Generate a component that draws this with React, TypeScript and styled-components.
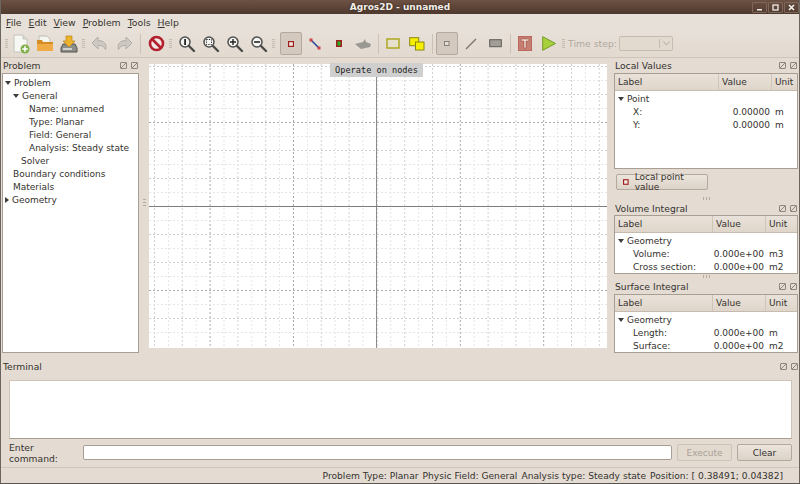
import React from 'react';
import styled, { createGlobalStyle } from 'styled-components';

const GlobalStyle = createGlobalStyle`
  html, body { margin: 0; padding: 0; background: #e4dcd3; }
  * { box-sizing: border-box; }
`;

const Window = styled.div`
  width: 800px;
  height: 484px;
  display: flex;
  flex-direction: column;
  overflow: hidden;
  background: #e4dcd3;
  color: #35322e;
  font-family: "DejaVu Sans", sans-serif;
  font-size: 9px;
  border-left: 1px solid #6b6560;
  border-right: 1px solid #6b6560;
  border-bottom: 1px solid #5a5550;
`;

const TitleBar = styled.div`
  height: 14px;
  flex: none;
  margin: 0 -1px;
  position: relative;
  display: flex;
  align-items: center;
  justify-content: center;
  background: linear-gradient(#6d5244, #4f392e);
  color: #f4efe9;
  font-size: 9px;
  font-weight: 700;
  text-shadow: 0 0 2px #221a15;
`;

const TitleText = styled.span`
  margin-left: 0;
`;

const WindowButtons = styled.div`
  position: absolute;
  right: 1px;
  top: 2px;
  display: flex;
  gap: 1px;
`;

const WindowButton = styled.div`
  width: 15px;
  height: 11px;
  border: 1px solid #7d665a;
  border-radius: 1px;
  display: flex;
  align-items: center;
  justify-content: center;
`;

const MenuBar = styled.div`
  height: 16px;
  flex: none;
  display: flex;
  align-items: center;
  padding-left: 5px;
  gap: 7px;
  background: #e7e0d8;
`;

const MenuItem = styled.span`
  font-size: 9.3px;
  &::first-letter { text-decoration: underline; }
`;

const Toolbar = styled.div`
  height: 28px;
  flex: none;
  display: flex;
  align-items: center;
  padding-left: 3px;
  background: linear-gradient(#e8e1d9, #e2d9cf);
  border-bottom: 1px solid #cfc5ba;
`;

const Handle = styled.div<{ $w: number }>`
  width: ${({ $w }) => $w}px;
  height: 9px;
  flex: none;
  background:
    repeating-linear-gradient(#c5bcb1 0 1px, transparent 1px 2px) 1px 0 / 3px 100% no-repeat;
`;

const Separator = styled.div<{ $w: number }>`
  width: ${({ $w }) => $w}px;
  height: 20px;
  flex: none;
  display: flex;
  justify-content: center;
  &::before {
    content: "";
    width: 1px;
    background: #cbc1b5;
  }
`;

const ToolButton = styled.div<{ $pressed?: boolean }>`
  width: 24px;
  height: 24px;
  flex: none;
  display: flex;
  align-items: center;
  justify-content: center;
  border-radius: 2px;
  ${({ $pressed }) =>
    $pressed &&
    `
    margin: 0 1px;
    width: 22px;
    height: 23px;
    background: #d3c9be;
    border: 1px solid #b3a99e;
  `}
`;

const TimeLabel = styled.span`
  flex: none;
  width: 51px;
  color: #b0a89e;
  font-size: 9.3px;
`;

const Combo = styled.div`
  width: 54px;
  height: 15px;
  flex: none;
  display: flex;
  justify-content: flex-end;
  border: 1px solid #c6bcb0;
  border-radius: 2px;
  background: #e2d9cf;
`;

const ComboArrow = styled.div`
  width: 13px;
  border-left: 1px solid #c6bcb0;
  margin: 2px 0;
  display: flex;
  align-items: center;
  justify-content: center;
`;

const Main = styled.div`
  height: 300px;
  flex: none;
  display: flex;
`;

const LeftDock = styled.div`
  width: 138px;
  flex: none;
  padding-left: 1px;
`;

const DockHeader = styled.div<{ $h?: number }>`
  height: ${({ $h }) => $h ?? 15}px;
  display: flex;
  align-items: center;
  justify-content: space-between;
  font-size: 9.2px;
  padding: 0 0 0 1px;
`;

const DockButtons = styled.div`
  display: flex;
  gap: 4px;
  padding-right: 1px;
`;

const DockButton = styled.div`
  width: 7px;
  height: 7px;
  border: 1px solid #8f877d;
  border-radius: 1px;
  background: linear-gradient(135deg, transparent 44%, #8f877d 44% 56%, transparent 56%);
`;

const Tree = styled.div`
  height: 280px;
  background: #fff;
  border: 1px solid #a89e92;
  padding-top: 2px;
`;

const TreeRow = styled.div<{ $indent: number }>`
  height: 13px;
  display: flex;
  align-items: center;
  padding-left: ${({ $indent }) => $indent}px;
  white-space: nowrap;
`;

const Arrow = styled.span<{ $open: boolean }>`
  width: 0;
  height: 0;
  margin-left: -8px;
  margin-right: 3px;
  border-style: solid;
  ${({ $open }) =>
    $open
      ? 'border-width: 4px 3px 0 3px; border-color: #3c3c3c transparent transparent transparent;'
      : 'border-width: 3px 0 3px 4px; border-color: transparent transparent transparent #3c3c3c;'}
`;

const Splitter = styled.div`
  width: 10px;
  flex: none;
  display: flex;
  align-items: center;
  justify-content: center;
  padding-bottom: 12px;
  color: #b5ab9f;
`;

const Dots = styled.div<{ $row?: boolean }>`
  width: ${({ $row }) => ($row ? 7 : 3)}px;
  height: ${({ $row }) => ($row ? 3 : 7)}px;
  background: ${({ $row }) =>
    $row
      ? 'repeating-linear-gradient(90deg, #b5ab9f 0 1px, transparent 1px 3px)'
      : 'repeating-linear-gradient(#b5ab9f 0 1px, transparent 1px 3px)'};
`;

const CanvasArea = styled.div`
  width: 458px;
  height: 284px;
  margin-top: 6px;
  flex: none;
  position: relative;
  background: #fff;
`;

const CanvasLabel = styled.div`
  position: absolute;
  left: 181px;
  top: -1px;
  width: 93px;
  height: 14px;
  background: #cfcfcf;
  color: #222;
  font-family: "DejaVu Sans Mono", monospace;
  font-size: 8.6px;
  line-height: 14px;
  text-align: center;
`;

const RightDock = styled.div`
  width: 184px;
  margin-left: 7px;
  flex: none;
  display: flex;
  flex-direction: column;
`;

const TableBox = styled.div<{ $h: number }>`
  height: ${({ $h }) => $h}px;
  flex: none;
  background: #fff;
  border: 1px solid #a89e92;
`;

const TableHead = styled.div<{ $cols: string }>`
  height: 17px;
  display: grid;
  grid-template-columns: ${({ $cols }) => $cols};
  background: linear-gradient(#e9e2da, #dfd5ca);
  border-bottom: 1px solid #c5bbaf;
`;

const HeadCell = styled.div`
  padding-left: 3px;
  display: flex;
  align-items: center;
  border-right: 1px solid #cfc5b9;
  &:last-child { border-right: none; }
`;

const TableRow = styled.div<{ $cols: string }>`
  height: 13px;
  display: grid;
  grid-template-columns: ${({ $cols }) => $cols};
  align-items: center;
  &:nth-child(2) { margin-top: 1px; }
`;

const GroupCell = styled.div`
  padding-left: 11px;
  display: flex;
  align-items: center;
`;

const LabelCell = styled.div`
  padding-left: 18px;
`;

const ValueCell = styled.div`
  text-align: right;
  padding-right: 2px;
`;

const UnitCell = styled.div`
  padding-left: 3px;
`;

const ActionRow = styled.div`
  height: 27px;
  flex: none;
  padding: 5px 0 0 2px;
`;

const PointButton = styled.div`
  width: 92px;
  height: 16px;
  display: flex;
  align-items: center;
  gap: 6px;
  padding-left: 6px;
  border: 1px solid #b3a99d;
  border-radius: 2px;
  background: linear-gradient(#ebe5dd, #dcd2c7);
`;

const DotRow = styled.div<{ $h: number }>`
  height: ${({ $h }) => $h}px;
  flex: none;
  display: flex;
  align-items: center;
  justify-content: center;
`;

const Terminal = styled.div`
  height: 109px;
  flex: none;
  display: flex;
  flex-direction: column;
  padding: 0 0 0 1px;
`;

const TerminalOutput = styled.div`
  height: 59px;
  flex: none;
  margin: 6px 7px 0 7px;
  background: #fff;
  border: 1px solid #cdc3b7;
  border-bottom-color: #a89e92;
`;

const CommandRow = styled.div`
  display: flex;
  align-items: center;
  margin: 5px 7px 0 7px;
  height: 17px;
`;

const CommandLabel = styled.span`
  width: 74px;
  flex: none;
  font-size: 9.2px;
`;

const CommandInput = styled.div`
  width: 589px;
  height: 15px;
  flex: none;
  background: #fff;
  border: 1px solid #a89e92;
  border-radius: 2px;
`;

const TermButton = styled.div<{ $disabled?: boolean }>`
  width: 55px;
  height: 17px;
  flex: none;
  margin-left: 5px;
  display: flex;
  align-items: center;
  justify-content: center;
  border: 1px solid ${({ $disabled }) => ($disabled ? '#cdc3b7' : '#b3a99d')};
  border-radius: 2px;
  color: ${({ $disabled }) => ($disabled ? '#aaa196' : '#35322e')};
  background: ${({ $disabled }) =>
    $disabled ? '#e2d9cf' : 'linear-gradient(#ebe5dd, #dcd2c7)'};
`;

const StatusBar = styled.div`
  height: 16px;
  flex: none;
  display: flex;
  align-items: center;
  justify-content: flex-end;
  gap: 4px;
  padding-right: 16px;
  border-top: 1px solid #cfc5ba;
  white-space: nowrap;
  font-size: 9.15px;
`;

const Magnifier = ({ mark }: { mark: React.ReactNode }) => (
  <svg width="18" height="18" viewBox="0 0 18 18">
    <line x1="10.5" y1="10.5" x2="16" y2="16" stroke="#4a4a48" strokeWidth="2.4" strokeLinecap="round" />
    <circle cx="7" cy="7" r="5" fill="#f4f4f2" stroke="#4f4f4d" strokeWidth="1.5" />
    {mark}
  </svg>
);

const icons: Record<string, React.ReactNode> = {
  newDoc: (
    <svg width="18" height="20" viewBox="0 0 18 20">
      <path d="M2 1h9l4 4v13H2z" fill="#f7f7f3" stroke="#c4c4bc" />
      <path d="M11 1v4h4" fill="#dcdcd6" stroke="#c4c4bc" />
      <circle cx="13" cy="15" r="4.5" fill="#7fb04a" />
      <path d="M13 12.2v5.6M10.2 15h5.6" stroke="#fff" strokeWidth="1.6" />
    </svg>
  ),
  open: (
    <svg width="18" height="18" viewBox="0 0 18 18">
      <path d="M3 1h8l3 3v5H3z" fill="#f5f5f0" stroke="#bdbdb5" />
      <path d="M1 5h5l1 2h10v9H1z" fill="#d58c24" />
      <path d="M1 9h16v7H1z" fill="#efab45" />
    </svg>
  ),
  save: (
    <svg width="18" height="18" viewBox="0 0 18 18">
      <path d="M3 9h12l2 4v4H1v-4z" fill="#8d8d89" stroke="#55554f" />
      <path d="M3 14h9" stroke="#eee" strokeWidth="1.4" />
      <path d="M6 1h6v5h3l-6 6-6-6h3z" fill="#edb32c" stroke="#b98416" strokeWidth=".7" />
    </svg>
  ),
  undo: (
    <svg width="18" height="18" viewBox="0 0 18 18">
      <path d="M7 2 1 8l6 6v-3.5c4-.3 6 .8 7.5 4 1.5-5-1-9-7.5-9z" fill="#cdc9c2" stroke="#b2aea7" />
    </svg>
  ),
  redo: (
    <svg width="18" height="18" viewBox="0 0 18 18">
      <path d="M11 2l6 6-6 6v-3.5c-4-.3-6 .8-7.5 4C2 9.5 4.500 5.500 11 5.500z" fill="#cdc9c2" stroke="#b2aea7" />
    </svg>
  ),
  stop: (
    <svg width="17" height="17" viewBox="0 0 17 17">
      <circle cx="8.500" cy="8.500" r="6.500" fill="#f1e6e4" stroke="#b21f2d" strokeWidth="2.600" />
      <line x1="4" y1="4" x2="13" y2="13" stroke="#b21f2d" strokeWidth="2.600" />
    </svg>
  ),
  zoomBest: <Magnifier mark={<rect x="6.200" y="4" width="1.800" height="6" fill="#222" />} />,
  zoomRegion: (
    <Magnifier
      mark={<rect x="4.500" y="4.500" width="5" height="5" fill="none" stroke="#222" strokeDasharray="1.200 1.200" />}
    />
  ),
  zoomIn: <Magnifier mark={<path d="M7 4v6M4 7h6" stroke="#222" strokeWidth="1.400" />} />,
  zoomOut: <Magnifier mark={<path d="M4 7h6" stroke="#222" strokeWidth="1.600" />} />,
  node: (
    <svg width="6" height="6" viewBox="0 0 6 6">
      <rect x=".6" y=".6" width="4.800" height="4.800" fill="#f3e9e2" stroke="#a02020" strokeWidth="1.200" />
    </svg>
  ),
  edge: (
    <svg width="12" height="12" viewBox="0 0 12 12">
      <line x1="2" y1="2" x2="10" y2="10" stroke="#1c3f9c" strokeWidth="1.400" />
      <rect x="0.500" y="0.500" width="3" height="3" fill="#c44" />
      <rect x="8.500" y="8.500" width="3" height="3" fill="#c44" />
    </svg>
  ),
  label: (
    <svg width="6" height="7" viewBox="0 0 6 7">
      <rect width="6" height="7" fill="#a02020" />
      <rect x="1.500" y="1.500" width="3" height="4" fill="#1fb51f" />
    </svg>
  ),
  mesh: (
    <svg width="16" height="10" viewBox="0 0 16 10">
      <path d="M0 5 8 3l2-3 1 3 5 2-1 3-9 2z" fill="#9a9892" />
    </svg>
  ),
  rect: (
    <svg width="14" height="12" viewBox="0 0 14 12">
      <rect x="1" y="1" width="12" height="9" fill="#e7e0cc" stroke="#a8a414" strokeWidth="1.400" />
    </svg>
  ),
  polys: (
    <svg width="16" height="14" viewBox="0 0 16 14">
      <rect x=".7" y=".7" width="9" height="8" fill="#f7ef00" stroke="#8a8612" />
      <rect x="6.500" y="5" width="8.500" height="8" fill="#f7ef00" stroke="#8a8612" />
    </svg>
  ),
  nodeSmall: (
    <svg width="6" height="6" viewBox="0 0 6 6">
      <rect x=".5" y=".5" width="4.500" height="4" fill="#e5ddd3" stroke="#85807a" />
    </svg>
  ),
  line: (
    <svg width="12" height="12" viewBox="0 0 12 12">
      <line x1="1" y1="11" x2="11" y2="1" stroke="#76736e" strokeWidth="1.300" />
    </svg>
  ),
  grayRect: (
    <svg width="13" height="9" viewBox="0 0 13 9">
      <rect x=".7" y=".7" width="11.600" height="7" fill="#a19d97" stroke="#5f5c57" />
    </svg>
  ),
  terminal: (
    <svg width="14" height="15" viewBox="0 0 14 15">
      <rect width="14" height="15" fill="#c67e72" stroke="#b0554a" />
      <path d="M3 3h8v2H8v7H6V5H3z" fill="#f3e4dc" stroke="#8e3c32" strokeWidth=".5" />
    </svg>
  ),
  play: (
    <svg width="14" height="15" viewBox="0 0 14 15">
      <path d="M.7.7v13.600L13.500 7.500z" fill="#a8cf3c" stroke="#6f9a22" />
    </svg>
  ),
};

// canvas grid, spacing read from the reference
const gridXs = Array.from({ length: 33 }, (_, i) => 5.500 + i * 13.9);
const gridYs = Array.from({ length: 20 }, (_, i) => 2.500 + i * 14);

const gridColor = (i: number, major: number) => {
  const d = Math.abs(i - major);
  if (d % 6 === 0) return '#a9a9a9';
  return d % 2 === 0 ? '#d0d0d0' : '#e6e6e6';
};

const CanvasGrid = () => (
  <svg width="458" height="284" viewBox="0 0 458 284">
    {gridXs.map((x, i) => (
      <line key={`x${i}`} x1={x} y1="0" x2={x} y2="284" stroke={gridColor(i, 16)} strokeDasharray="2 2" />
    ))}
    {gridYs.map((y, i) => (
      <line key={`y${i}`} x1="0" y1={y} x2="458" y2={y} stroke={gridColor(i, 10)} strokeDasharray="2 2" />
    ))}
    <line x1="227.500" y1="0" x2="227.500" y2="284" stroke="#8c8c8c" />
    <line x1="0" y1="142.500" x2="458" y2="142.500" stroke="#7c7c7c" />
  </svg>
);

const problemTree: { text: string; indent: number; arrow?: boolean }[] = [
  { text: 'Problem', indent: 10, arrow: true },
  { text: 'General', indent: 18, arrow: true },
  { text: 'Name: unnamed', indent: 26 },
  { text: 'Type: Planar', indent: 26 },
  { text: 'Field: General', indent: 26 },
  { text: 'Analysis: Steady state', indent: 26 },
  { text: 'Solver', indent: 18 },
  { text: 'Boundary conditions', indent: 10 },
  { text: 'Materials', indent: 10 },
  { text: 'Geometry', indent: 10, arrow: false },
];

const ResultTable = ({
  h,
  cols,
  group,
  rows,
}: {
  h: number;
  cols: string;
  group: string;
  rows: [string, string, string][];
}) => (
  <TableBox $h={h}>
    <TableHead $cols={cols}>
      <HeadCell>Label</HeadCell>
      <HeadCell>Value</HeadCell>
      <HeadCell>Unit</HeadCell>
    </TableHead>
    <TableRow $cols="1fr">
      <GroupCell>
        <Arrow $open />
        {group}
      </GroupCell>
    </TableRow>
    {rows.map(([label, value, unit]) => (
      <TableRow key={label} $cols={cols}>
        <LabelCell>{label}</LabelCell>
        <ValueCell>{value}</ValueCell>
        <UnitCell>{unit}</UnitCell>
      </TableRow>
    ))}
  </TableBox>
);

const DockControls = () => (
  <DockButtons>
    <DockButton />
    <DockButton />
  </DockButtons>
);

export default function App() {
  return (
    <Window>
      <GlobalStyle />
      <TitleBar>
        <TitleText>Agros2D - unnamed</TitleText>
        <WindowButtons>
          <WindowButton>
            <svg width="7" height="7" viewBox="0 0 7 7">
              <rect x="1" y="5" width="5" height="1.500" fill="#f2ede8" />
            </svg>
          </WindowButton>
          <WindowButton>
            <svg width="7" height="7" viewBox="0 0 7 7">
              <rect x="1" y="1" width="5" height="5" fill="none" stroke="#f2ede8" strokeWidth="1.300" />
            </svg>
          </WindowButton>
          <WindowButton>
            <svg width="7" height="7" viewBox="0 0 7 7">
              <path d="M1 1l5 5M6 1 1 6" stroke="#f7f3ee" strokeWidth="1.600" />
            </svg>
          </WindowButton>
        </WindowButtons>
      </TitleBar>

      <MenuBar>
        {['File', 'Edit', 'View', 'Problem', 'Tools', 'Help'].map((m) => (
          <MenuItem key={m}>{m}</MenuItem>
        ))}
      </MenuBar>

      <Toolbar>
        <Handle $w={5} />
        <ToolButton>{icons.newDoc}</ToolButton>
        <ToolButton>{icons.open}</ToolButton>
        <ToolButton>{icons.save}</ToolButton>
        <Handle $w={7} />
        <ToolButton>{icons.undo}</ToolButton>
        <ToolButton>{icons.redo}</ToolButton>
        <Separator $w={8} />
        <ToolButton>{icons.stop}</ToolButton>
        <Handle $w={7} />
        <ToolButton>{icons.zoomBest}</ToolButton>
        <ToolButton>{icons.zoomRegion}</ToolButton>
        <ToolButton>{icons.zoomIn}</ToolButton>
        <ToolButton>{icons.zoomOut}</ToolButton>
        <Handle $w={8} />
        <ToolButton $pressed>{icons.node}</ToolButton>
        <ToolButton>{icons.edge}</ToolButton>
        <ToolButton>{icons.label}</ToolButton>
        <ToolButton>{icons.mesh}</ToolButton>
        <Separator $w={6} />
        <ToolButton>{icons.rect}</ToolButton>
        <ToolButton>{icons.polys}</ToolButton>
        <Separator $w={6} />
        <ToolButton $pressed>{icons.nodeSmall}</ToolButton>
        <ToolButton>{icons.line}</ToolButton>
        <ToolButton>{icons.grayRect}</ToolButton>
        <Separator $w={6} />
        <ToolButton>{icons.terminal}</ToolButton>
        <ToolButton>{icons.play}</ToolButton>
        <Handle $w={7} />
        <TimeLabel>Time step:</TimeLabel>
        <Combo>
          <ComboArrow>
            <svg width="7" height="5" viewBox="0 0 7 5">
              <path d="M.5.5 3.500 4 6.500.5" fill="none" stroke="#b0a89e" />
            </svg>
          </ComboArrow>
        </Combo>
      </Toolbar>

      <Main>
        <LeftDock>
          <DockHeader>
            Problem
            <DockControls />
          </DockHeader>
          <Tree>
            {problemTree.map((row) => (
              <TreeRow key={row.text} $indent={row.indent}>
                {row.arrow !== undefined && <Arrow $open={row.arrow} />}
                {row.text}
              </TreeRow>
            ))}
          </Tree>
        </LeftDock>

        <Splitter>
          <Dots />
        </Splitter>

        <CanvasArea>
          <CanvasGrid />
          <CanvasLabel>Operate on nodes</CanvasLabel>
        </CanvasArea>

        <RightDock>
          <DockHeader>
            Local Values
            <DockControls />
          </DockHeader>
          <TableBox $h={96}>
            <TableHead $cols="104px 53px 1fr">
              <HeadCell>Label</HeadCell>
              <HeadCell>Value</HeadCell>
              <HeadCell>Unit</HeadCell>
            </TableHead>
            <TableRow $cols="1fr">
              <GroupCell>
                <Arrow $open />
                Point
              </GroupCell>
            </TableRow>
            <TableRow $cols="104px 53px 1fr">
              <LabelCell>X:</LabelCell>
              <ValueCell>0.00000</ValueCell>
              <UnitCell>m</UnitCell>
            </TableRow>
            <TableRow $cols="104px 53px 1fr">
              <LabelCell>Y:</LabelCell>
              <ValueCell>0.00000</ValueCell>
              <UnitCell>m</UnitCell>
            </TableRow>
          </TableBox>
          <ActionRow>
            <PointButton>
              {icons.node}
              Local point value
            </PointButton>
          </ActionRow>
          <DotRow $h={5}>
            <Dots $row />
          </DotRow>
          <DockHeader $h={14}>
            Volume Integral
            <DockControls />
          </DockHeader>
          <ResultTable
            h={59}
            cols="98px 53px 1fr"
            group="Geometry"
            rows={[
              ['Volume:', '0.000e+00', 'm3'],
              ['Cross section:', '0.000e+00', 'm2'],
            ]}
          />
          <DotRow $h={5}>
            <Dots $row />
          </DotRow>
          <DockHeader $h={15}>
            Surface Integral
            <DockControls />
          </DockHeader>
          <ResultTable
            h={59}
            cols="98px 53px 1fr"
            group="Geometry"
            rows={[
              ['Length:', '0.000e+00', 'm'],
              ['Surface:', '0.000e+00', 'm2'],
            ]}
          />
        </RightDock>
      </Main>

      <Terminal>
        <DockHeader $h={16}>
          Terminal
          <DockControls />
        </DockHeader>
        <TerminalOutput />
        <CommandRow>
          <CommandLabel>Enter command:</CommandLabel>
          <CommandInput />
          <TermButton $disabled>Execute</TermButton>
          <TermButton>Clear</TermButton>
        </CommandRow>
      </Terminal>

      <StatusBar>
        <span>Problem Type: Planar</span>
        <span>Physic Field: General</span>
        <span>Analysis type: Steady state</span>
        <span>Position: [ 0.38491; 0.04382]</span>
      </StatusBar>
    </Window>
  );
}
